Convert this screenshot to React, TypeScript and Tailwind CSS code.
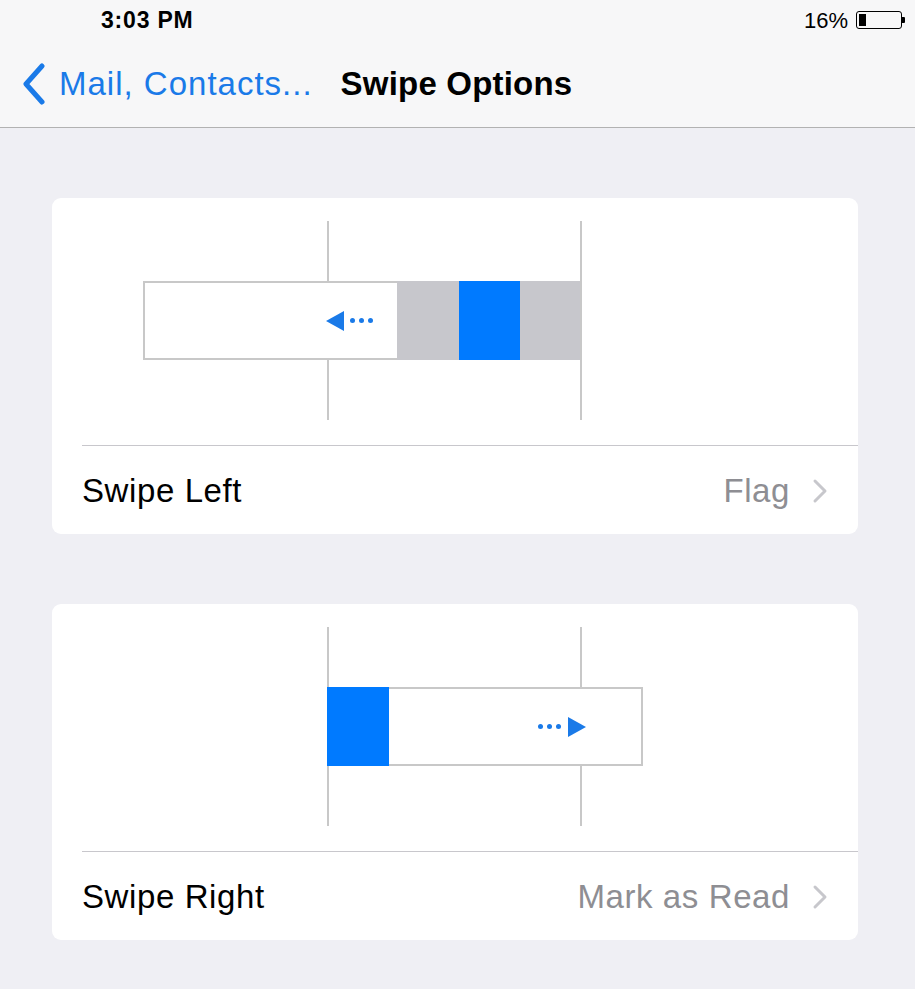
import React from "react";

const font = { fontFamily: '"Liberation Sans", Arial, sans-serif' };

function Chevron({ className = "" }: { className?: string }) {
  return (
    <svg width="16" height="26" viewBox="0 0 16 26" className={className}>
      <path d="M3 3 L13 13 L3 23" fill="none" stroke="#c7c7cc" strokeWidth="3" strokeLinecap="round" strokeLinejoin="round" />
    </svg>
  );
}

function Dots() {
  return (
    <div className="flex gap-[4px]">
      <div className="w-[5px] h-[5px] rounded-full bg-[#1a7ae8]" />
      <div className="w-[5px] h-[5px] rounded-full bg-[#1a7ae8]" />
      <div className="w-[5px] h-[5px] rounded-full bg-[#1a7ae8]" />
    </div>
  );
}

function LeftDiagram() {
  return (
    <div className="relative h-[247px]">
      <div className="absolute left-[275px] top-[23px] w-[2px] h-[199px] bg-[#c8c8c8]" />
      <div className="absolute left-[528px] top-[23px] w-[2px] h-[199px] bg-[#c8c8c8]" />
      <div className="absolute left-[91px] top-[83px] flex h-[79px]">
        <div className="w-[254px] h-full border-2 border-[#c8c8c8] border-r-0 bg-white flex items-center justify-end pr-[24px] gap-[6px]">
          <svg width="18" height="20" viewBox="0 0 18 20"><path d="M0 10 L18 0 L18 20 Z" fill="#1a7ae8" /></svg>
          <Dots />
        </div>
        <div className="w-[62px] h-full bg-[#c7c7cc]" />
        <div className="w-[61px] h-full bg-[#007aff]" />
        <div className="w-[60px] h-full bg-[#c7c7cc]" />
      </div>
    </div>
  );
}

function RightDiagram() {
  return (
    <div className="relative h-[247px]">
      <div className="absolute left-[275px] top-[23px] w-[2px] h-[199px] bg-[#c8c8c8]" />
      <div className="absolute left-[528px] top-[23px] w-[2px] h-[199px] bg-[#c8c8c8]" />
      <div className="absolute left-[275px] top-[83px] flex h-[79px]">
        <div className="w-[62px] h-full bg-[#007aff]" />
        <div className="w-[254px] h-full border-2 border-[#c8c8c8] border-l-0 bg-white flex items-center justify-end pr-[55px] gap-[7px]">
          <Dots />
          <svg width="18" height="20" viewBox="0 0 18 20"><path d="M18 10 L0 0 L0 20 Z" fill="#1a7ae8" /></svg>
        </div>
      </div>
    </div>
  );
}

function Card({ diagram, label, value }: { diagram: React.ReactNode; label: string; value: string }) {
  return (
    <div className="ml-[52px] mr-[57px] bg-white rounded-[9px] overflow-hidden">
      {diagram}
      <div className="ml-[30px] h-[1px] bg-[#c8c7cc]" />
      <div className="h-[88px] flex items-center pl-[30px] pr-[30px] pt-[2px]">
        <span className="text-[33px] text-black flex-1 tracking-[0.6px]">{label}</span>
        <span className="text-[33px] text-[#8e8e93] tracking-[0.6px]">{value}</span>
        <Chevron className="ml-[22px]" />
      </div>
    </div>
  );
}

export default function App() {
  return (
    <div className="w-[915px] h-[989px] bg-[#efeff4] overflow-hidden" style={font}>
      <div className="bg-[#f7f7f8] h-[128px] border-b border-[#b2b2b2] relative">
        <div className="h-[40px] flex items-center px-[101px] pr-[10px]">
          <span className="text-[23px] font-bold text-black flex-1 tracking-[0.8px]">3:03 PM</span>
          <span className="text-[22px] text-black mr-[8px]">16%</span>
          <div className="flex items-center">
            <div className="w-[46px] h-[18px] border-[1.5px] border-black rounded-[3px] p-[2px]">
              <div className="w-[7px] h-full bg-black" />
            </div>
            <div className="w-[3px] h-[6px] bg-black rounded-r-[1px]" />
          </div>
        </div>
        <div className="flex items-center h-[88px] pl-[20px]">
          <svg width="26" height="42" viewBox="0 0 26 42">
            <path d="M22 3 L6 21 L22 39" fill="none" stroke="#1a7ae8" strokeWidth="5" strokeLinecap="round" strokeLinejoin="round" />
          </svg>
          <span className="ml-[13px] text-[33px] text-[#1a7ae8] tracking-[1px]">Mail, Contacts...</span>
          <span className="ml-[28px] text-[33px] font-bold text-black tracking-[0.2px]">Swipe Options</span>
        </div>
      </div>
      <div className="pt-[70px] flex flex-col gap-[70px]">
        <Card diagram={<LeftDiagram />} label="Swipe Left" value="Flag" />
        <Card diagram={<RightDiagram />} label="Swipe Right" value="Mark as Read" />
      </div>
    </div>
  );
}
